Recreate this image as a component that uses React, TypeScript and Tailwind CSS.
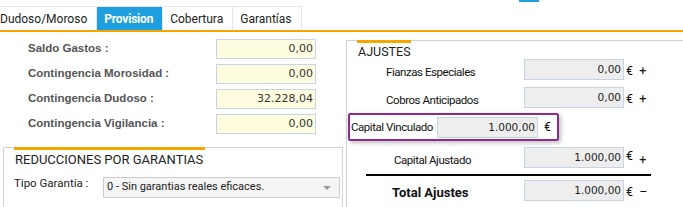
import type { ReactNode } from "react";

const ui = "font-['Roboto',sans-serif]";
const tahoma = "font-['Liberation_Sans',Arial,sans-serif]";
const num = "font-['DejaVu_Sans',Verdana,sans-serif]";

function Tab({ children, active = false }: { children: ReactNode; active?: boolean }) {
  return (
    <div
      className={`h-[24px] flex items-center pl-[7px] pr-[9px] text-[12px] border-t border-r border-[#e6e6e6] ${
        active ? "bg-[#1e9fe0] text-white font-bold border-[#1e9fe0] tracking-[-0.2px]" : "bg-white text-[#222]"
      }`}
    >
      {children}
    </div>
  );
}

function YellowField({ label, value }: { label: string; value: string }) {
  return (
    <div className="flex items-center h-[20px]">
      <div className={`w-[216px] pl-[28px] text-[11.5px] font-bold text-[#555] ${tahoma}`}>{label}</div>
      <div
        className={`w-[100px] h-[20px] border border-[#c6d4e6] bg-[#fefde0] text-right pr-[2px] text-[11px] leading-[18px] text-[#333] ${num}`}
      >
        {value}
      </div>
    </div>
  );
}

function GrayInput({ value, w = "w-[100px]" }: { value: string; w?: string }) {
  return (
    <div
      className={`${w} h-[21px] border border-[#c6d4e6] bg-[#eeeeee] text-right pr-[2px] text-[10.5px] leading-[19px] text-[#222] ${num}`}
    >
      {value}
    </div>
  );
}

function AdjustRow({
  label,
  value,
  sign,
  labelPad,
  bold = false,
  signLow = false,
}: {
  label: string;
  value: string;
  sign: string;
  labelPad: string;
  bold?: boolean;
  signLow?: boolean;
}) {
  return (
    <div className="flex items-end h-[21px]">
      <div
        className={`w-[177px] ${labelPad} leading-[16px] text-[#111] whitespace-nowrap ${
          bold ? "font-bold text-[13px]" : "text-[11.5px] tracking-[-0.45px]"
        }`}
      >
        {label}
      </div>
      <GrayInput value={value} />
      <div className="pl-[2px] text-[12.5px] leading-[18px] text-[#111] whitespace-pre">
        €{"  "}
        <span className={signLow ? "align-sub" : ""}>{sign}</span>
      </div>
    </div>
  );
}

export default function App() {
  return (
    <div className={`w-[683px] h-[207px] overflow-hidden bg-white ${ui}`}>
      <div className="h-[2px] flex">
        <div className="ml-[519px] w-[20px] bg-[#1e9fe0]" />
      </div>
      <div className="flex mt-[4px] -ml-[7px]">
        <Tab>Dudoso/Moroso</Tab>
        <Tab active>Provision</Tab>
        <Tab>Cobertura</Tab>
        <Tab>Garantías</Tab>
      </div>
      <div className="h-[2px] bg-[#f7a600]" />

      <div className="flex">
        {/* left column */}
        <div className="w-[343px] shrink-0">
          <div className="pt-[7px] flex flex-col gap-[5px]">
            <YellowField label="Saldo Gastos :" value="0,00" />
            <YellowField label="Contingencia Morosidad :" value="0,00" />
            <YellowField label="Contingencia Dudoso :" value="32.228,04" />
            <YellowField label="Contingencia Vigilancia :" value="0,00" />
          </div>

          <div className="mt-[13px] ml-[3px] h-[80px] border-l border-t border-r border-[#d4d4cc]">
            <div className="ml-[10px] w-[191px] h-[3px] -mt-px bg-[#f7a600]" />
            <div className="pl-[11px] pt-[1px] text-[13px] leading-[17px] text-[#222]">REDUCCIONES POR GARANTIAS</div>
            <div className="flex items-start pl-[10px] pt-[7px]">
              <div className="w-[89px] text-[11.5px] leading-[16px] text-[#222]">Tipo Garantía :</div>
              <div className="w-[237px] h-[21px] mt-[2px] border border-[#cccccc] bg-[#f5f5f5] flex items-center justify-between pl-[3px] pr-[8px]">
                <span className="text-[11px] text-[#222]">0 - Sin garantias reales eficaces.</span>
                <span className="w-0 h-0 border-l-[4px] border-r-[4px] border-t-[4px] border-l-transparent border-r-transparent border-t-[#999]" />
              </div>
            </div>
          </div>
        </div>

        {/* right column */}
        <div className="flex-1 ml-[3px] mt-[8px] h-[200px] border-l border-t border-[#d4d4cc]">
          <div className="ml-[10px] w-[54px] h-[3px] -mt-px bg-[#f7a600]" />
          <div className="pl-[11px] h-[15px] mt-[1px] text-[12.5px] leading-[15px] text-[#222]">AJUSTES</div>

          <AdjustRow label="Fianzas Especiales" value="0,00" sign="+" labelPad="pl-[39px]" />
          <div className="mt-[7px]">
            <AdjustRow label="Cobros Anticipados" value="0,00" sign="+" labelPad="pl-[39px]" />
          </div>

          <div className="mt-[5px] ml-[1px] w-[211px] h-[28px] border-2 border-[#8e2a8e] rounded-[2px] shadow-[2px_2px_4px_rgba(0,0,0,0.25)] flex items-center">
            <div className="w-[87px] pl-[1px] text-[11.5px] tracking-[-0.45px] leading-[16px] text-[#111] whitespace-nowrap">
              Capital Vinculado
            </div>
            <GrayInput value="1.000,00" w="w-[101px]" />
            <div className="pl-[6px] text-[12.5px] text-[#111]">€</div>
          </div>

          <div className="mt-[6px]">
            <AdjustRow label="Capital Ajustado" value="1.000,00" sign="+" labelPad="pl-[47px]" signLow />
          </div>
          <div className="mt-[6px] ml-[19px] w-[285px] h-[2px] bg-black" />
          <div className="mt-[4px]">
            <AdjustRow label="Total Ajustes" value="1.000,00" sign="–" labelPad="pl-[45px]" bold />
          </div>
        </div>
      </div>
    </div>
  );
}
